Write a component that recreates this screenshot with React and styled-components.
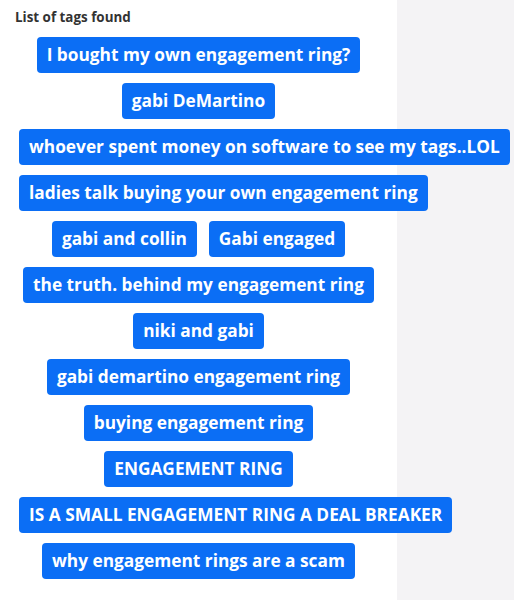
import React from 'react';
import styled, { createGlobalStyle } from 'styled-components';

const GlobalStyle = createGlobalStyle`
    html, body {
        margin: 0;
        padding: 0;
        background: #ffffff;
    }
    body {
        font-family: "Open Sans", "Noto Sans", sans-serif;
    }
`;

const Page = styled.div`
    display: flex;
    flex-direction: row;
    width: 514px;
    height: 600px;
    overflow: hidden;
    `;

const Main = styled.div`
    display: flex;
    flex-direction: column;
    width: 397px;
    flex-shrink: 0;
    padding: 8px 13px 0 13px;
    box-sizing: border-box;
    background: #ffffff;
    `;

const Side = styled.div`
    flex: 1;
    background: #f4f3f5;
    `;

const Title = styled.div`
    font-size: 13.4px;
    line-height: 18px;
    font-weight: 700;
    color: #333333;
    padding-left: 2px;
    `;

// tags too wide for the column start at the left and run into the grey panel
const TagList = styled.div`
    display: flex;
    flex-wrap: wrap;
    justify-content: safe center;
    margin-top: 6px;
    position: relative;
    z-index: 1;
    `;

const Tag = styled.span`
    display: inline-block;
    height: 36px;
    line-height: 36px;
    padding: 0 10px;
    margin: 5px 6px;
    border-radius: 4px;
    background: #0b6ef5;
    color: #ffffff;
    font-size: 17.3px;
    font-weight: 700;
    white-space: nowrap;
    `;

const tags = [
    'I bought my own engagement ring?',
    'gabi DeMartino',
    'whoever spent money on software to see my tags..LOL',
    'ladies talk buying your own engagement ring',
    'gabi and collin',
    'Gabi engaged',
    'the truth. behind my engagement ring',
    'niki and gabi',
    'gabi demartino engagement ring',
    'buying engagement ring',
    'ENGAGEMENT RING',
    'IS A SMALL ENGAGEMENT RING A DEAL BREAKER',
    'why engagement rings are a scam',
];

export default function App() {
    return (
        <Page>
            <GlobalStyle />
            <Main>
                <Title>List of tags found</Title>
                <TagList>
                    {tags.map((t) => (
                        <Tag key={t}>{t}</Tag>
                    ))}
                </TagList>
            </Main>
            <Side />
        </Page>
    );
}
